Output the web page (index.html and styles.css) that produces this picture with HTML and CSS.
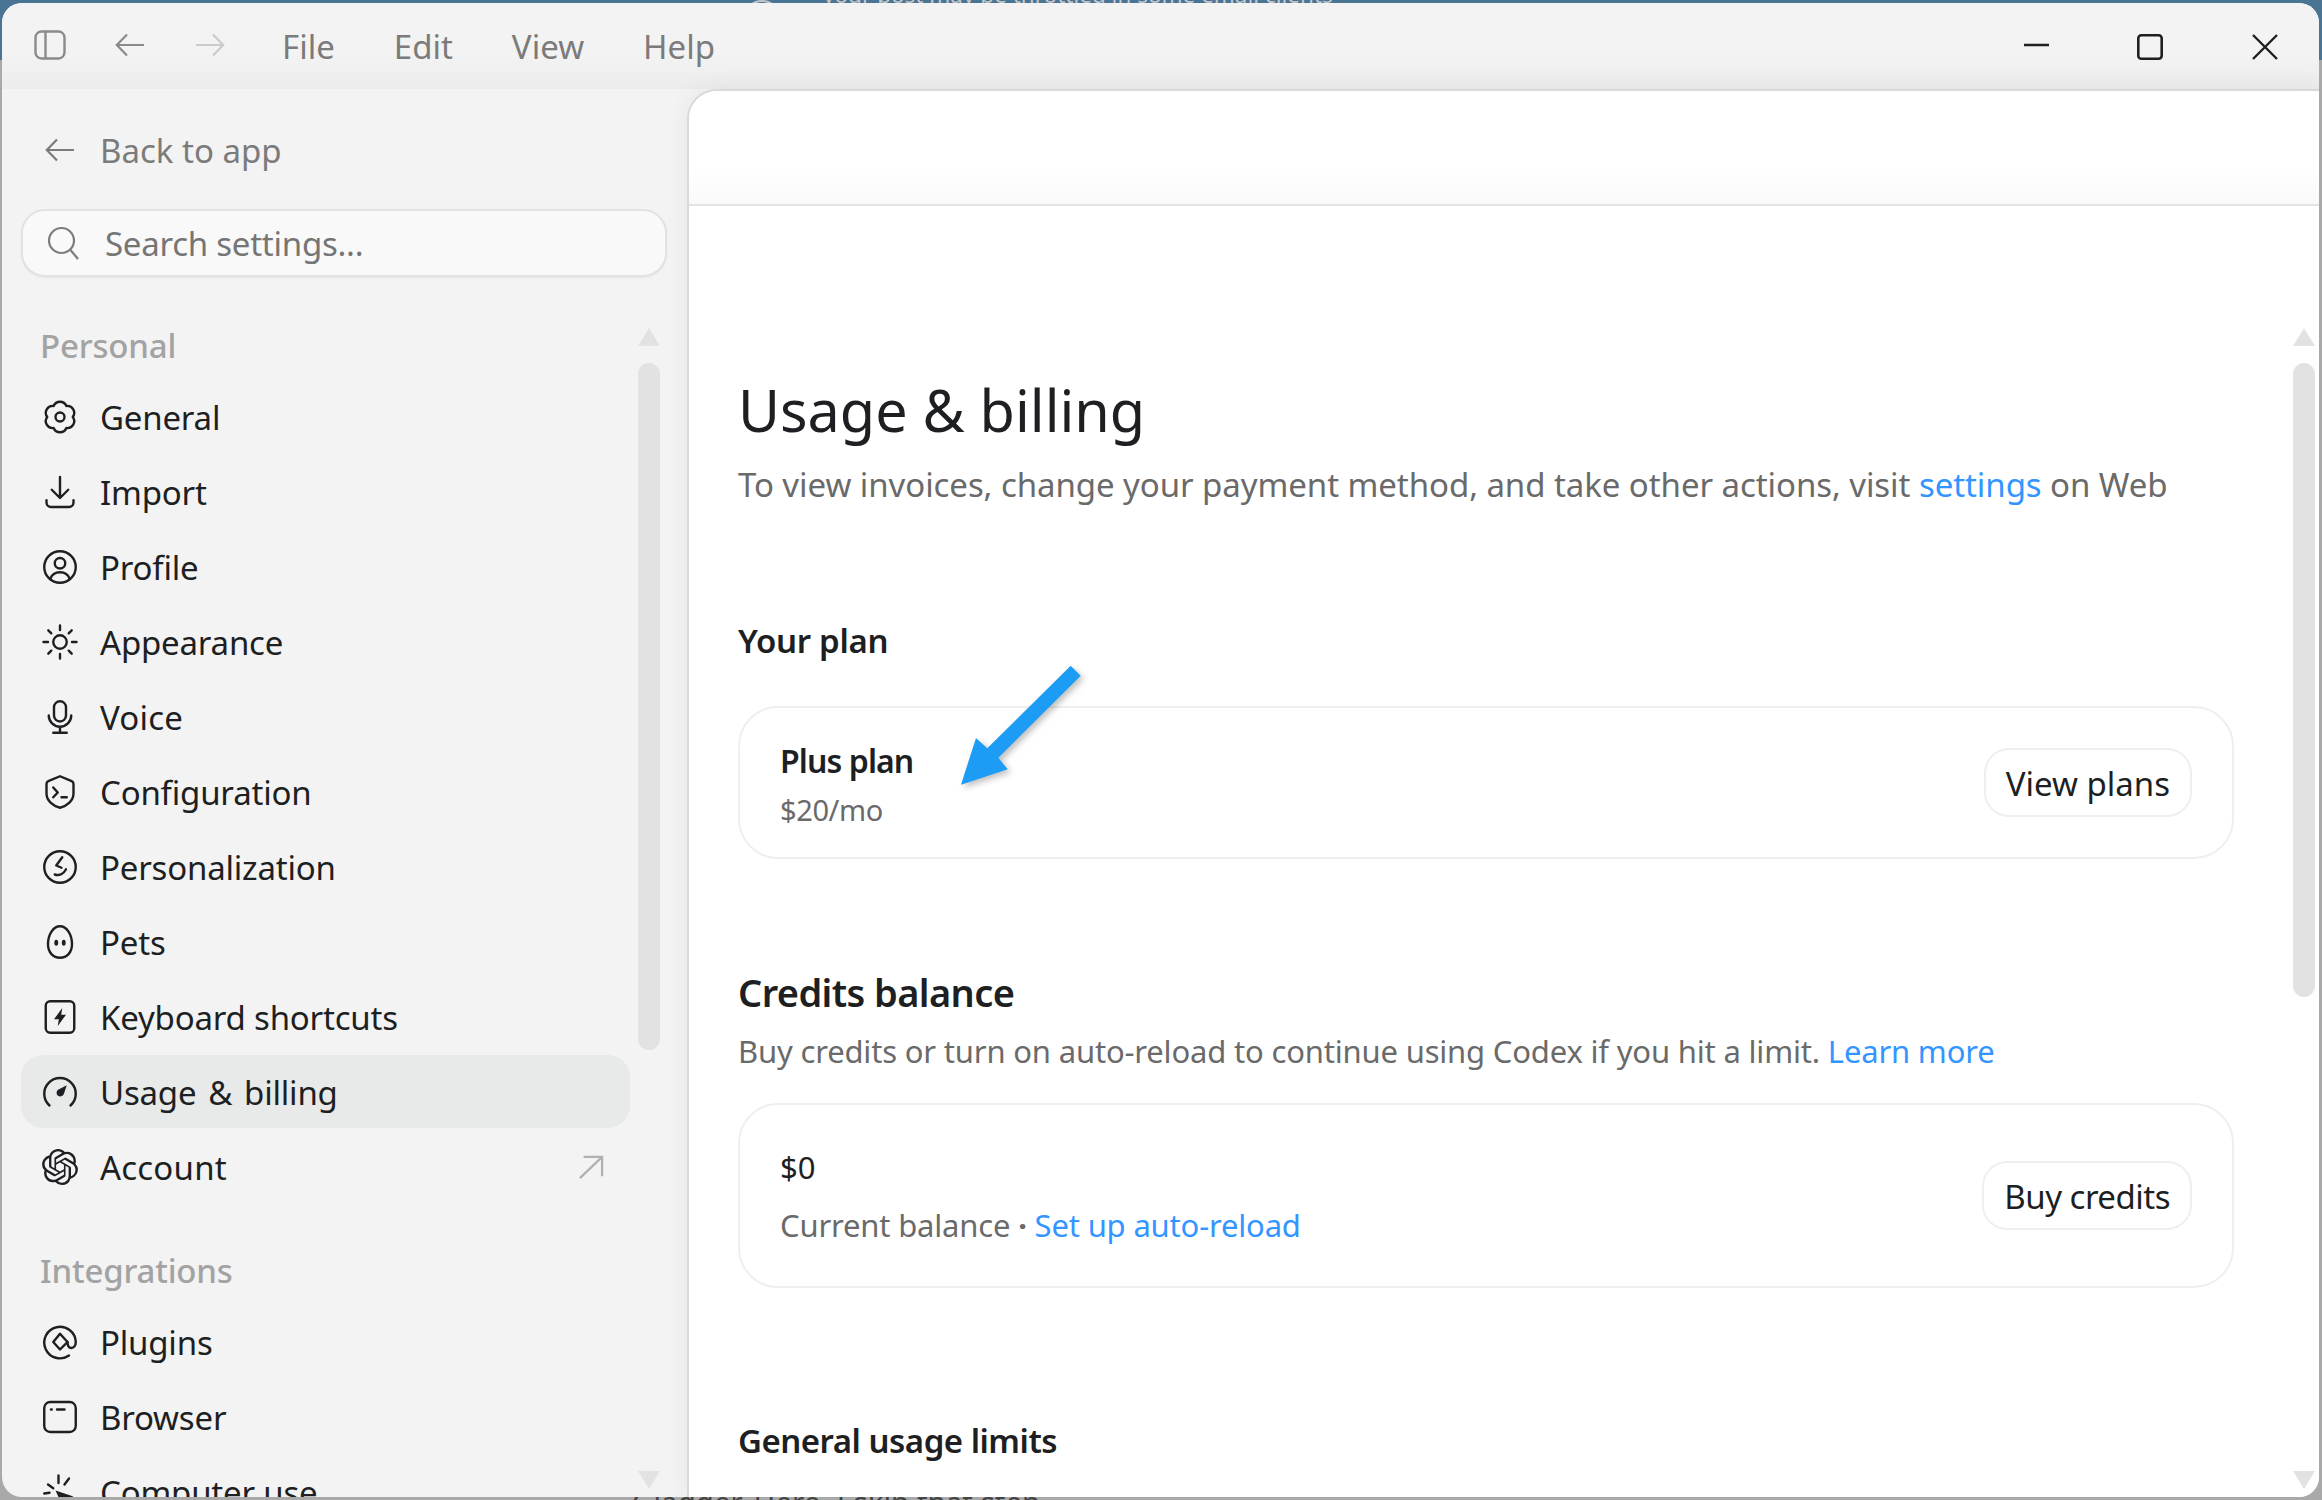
FILE: index.html
```html
<!DOCTYPE html>
<html lang="en">
<head>
<meta charset="UTF-8">
<meta name="viewport" content="width=device-width, initial-scale=1.0">
<title>Usage &amp; billing</title>
<link rel="stylesheet" href="styles.css">
</head>
<body>
  <!-- window behind, only its edges show -->
  <div class="behind-top">
    <span class="behind-circle"></span>
    <span>your post may be throttled in some email clients</span>
  </div>
  <div class="behind-bottom">Gladder. Here, I skip that step.</div>

  <div class="window">
    <div class="titlebar">
      <div class="title-left">
        <svg class="tb-panel" viewBox="0 0 32 30" fill="none" stroke="currentColor" stroke-width="2.4"><rect x="1.5" y="1.5" width="29" height="27" rx="6"/><path d="M11.5 1.5v27"/></svg>
        <svg class="tb-arrow" viewBox="0 0 30 24" fill="none" stroke="currentColor" stroke-width="2.2"><path d="M29 12H2M12 1.5 1.8 12 12 22.5"/></svg>
        <svg class="tb-arrow tb-arrow-off" viewBox="0 0 30 24" fill="none" stroke="currentColor" stroke-width="2.2"><path d="M1 12h27M18 1.5 28.2 12 18 22.5"/></svg>
        <nav class="menu">
          <span>File</span>
          <span>Edit</span>
          <span>View</span>
          <span>Help</span>
        </nav>
      </div>
      <div class="win-controls">
        <svg class="win-min" viewBox="0 0 26 26" fill="none" stroke="currentColor" stroke-width="2.6"><path d="M0 11h25"/></svg>
        <svg viewBox="0 0 26 26" fill="none" stroke="currentColor" stroke-width="2.6"><rect x="1.3" y="1.3" width="23.4" height="23.4" rx="3"/></svg>
        <svg viewBox="0 0 26 26" fill="none" stroke="currentColor" stroke-width="2.4"><path d="M1 1l24 24M25 1 1 25"/></svg>
      </div>
    </div>

    <div class="layout">
      <aside class="sidebar">
        <div class="back-link">
          <svg viewBox="0 0 30 24" fill="none" stroke="currentColor" stroke-width="2.2"><path d="M29 12H2M12 1.5 1.8 12 12 22.5"/></svg>
          <span>Back to app</span>
        </div>
        <div class="search-box">
          <svg viewBox="0 0 32 34" fill="none" stroke="currentColor" stroke-width="2.2"><circle cx="14.5" cy="14.5" r="12.5"/><path d="M23.5 24 31 33"/></svg>
          <span>Search settings...</span>
        </div>

        <div class="side-scroll">
          <div class="nav-list">
            <div class="nav-label">Personal</div>
            <div class="nav-item">
              <svg class="icon" viewBox="0 0 24 24"><path d="M7.75 4.64A4.6 4.6 0 0 1 16.25 4.64 4.6 4.6 0 0 1 20.5 12 4.6 4.6 0 0 1 16.25 19.36 4.6 4.6 0 0 1 7.75 19.36 4.6 4.6 0 0 1 3.5 12 4.6 4.6 0 0 1 7.75 4.64z"/><circle cx="12" cy="12" r="3"/></svg>
              <span>General</span>
            </div>
            <div class="nav-item">
              <svg class="icon" viewBox="0 0 24 24"><path d="M12 2v13.5M6.5 10.5l5.5 5.5 5.5-5.5M3 17.5V19a3 3 0 0 0 3 3h12a3 3 0 0 0 3-3v-1.500"/></svg>
              <span>Import</span>
            </div>
            <div class="nav-item">
              <svg class="icon" viewBox="0 0 24 24"><circle cx="12" cy="12" r="10.500"/><circle cx="12" cy="9.500" r="3.500"/><path d="M5.500 20c1-3 3.500-4.500 6.500-4.500s5.500 1.500 6.500 4.500"/></svg>
              <span>Profile</span>
            </div>
            <div class="nav-item">
              <svg class="icon" viewBox="0 0 24 24"><circle cx="12" cy="12" r="4.500"/><path d="M12 1v3M12 20v3M1 12h3M20 12h3M4.200 4.200l2 2M17.800 17.800l2 2M4.200 19.800l2-2M17.800 6.200l2-2"/></svg>
              <span>Appearance</span>
            </div>
            <div class="nav-item">
              <svg class="icon" viewBox="0 0 24 24"><rect x="8" y="1.500" width="8" height="13.500" rx="4"/><path d="M4.500 11a7.500 7.500 0 0 0 15 0M12 18.500v4M7.500 22.500h9"/></svg>
              <span class="word-wide">Voice</span>
            </div>
            <div class="nav-item">
              <svg class="icon" viewBox="0 0 24 24"><path d="M12 1.500l7.800 3.300a2 2 0 0 1 1.200 1.800V13c0 4.800-4.200 8.200-9 9.500-4.800-1.300-9-4.700-9-9.500V6.600a2 2 0 0 1 1.200-1.800z"/><path d="M7.500 9l3 3.300-3 3.200M13 15.500h3.500"/></svg>
              <span>Configuration</span>
            </div>
            <div class="nav-item">
              <svg class="icon" viewBox="0 0 24 24"><circle cx="12" cy="12" r="10.500"/><path d="M13.500 5.500 9.500 11l3.500 1.500M8.500 17c3 1 6-.5 7.500-3.500"/></svg>
              <span>Personalization</span>
            </div>
            <div class="nav-item">
              <svg class="icon" viewBox="0 0 24 24"><path d="M12 1.500c4.500 0 8 5.500 8 12 0 5.500-3.500 9-8 9s-8-3.500-8-9c0-6.500 3.500-12 8-12z"/><ellipse class="fill" cx="9.500" cy="12.500" rx="1.300" ry="2"/><ellipse class="fill" cx="14.500" cy="12.500" rx="1.300" ry="2"/></svg>
              <span>Pets</span>
            </div>
            <div class="nav-item">
              <svg class="icon" viewBox="0 0 24 24"><rect x="2.500" y="1.500" width="19" height="21" rx="3"/><path class="fill" d="M13.500 6 8 13.500h3.200L10.500 18 16 10.500h-3.200z"/></svg>
              <span>Keyboard shortcuts</span>
            </div>
            <div class="nav-item nav-item-active">
              <svg class="icon" viewBox="0 0 24 24"><path d="M5 21a10.500 10.500 0 1 1 14 0"/><path class="fill" d="M16.500 7.500 14.500 13.500a2.500 2.500 0 1 1-3.800-3z"/></svg>
              <span class="word-gap">Usage &amp; billing</span>
            </div>
            <div class="nav-item">
              <svg class="icon icon-solid" viewBox="0 0 24 24"><path d="M22.2819 9.8211a5.9847 5.9847 0 0 0-.5157-4.9108 6.0462 6.0462 0 0 0-6.5098-2.9A6.0651 6.0651 0 0 0 4.9807 4.1818a5.9847 5.9847 0 0 0-3.9977 2.9 6.0462 6.0462 0 0 0 .7427 7.0966 5.98 5.98 0 0 0 .511 4.9107 6.051 6.051 0 0 0 6.5146 2.9001A5.9847 5.9847 0 0 0 13.2599 24a6.0557 6.0557 0 0 0 5.7718-4.2058 5.9894 5.9894 0 0 0 3.9977-2.9001 6.0557 6.0557 0 0 0-.7475-7.0729zm-9.022 12.6081a4.4755 4.4755 0 0 1-2.8764-1.0408l.1419-.0804 4.7783-2.7582a.7948.7948 0 0 0 .3927-.6813v-6.7369l2.02 1.1686a.071.071 0 0 1 .038.052v5.5826a4.504 4.504 0 0 1-4.4945 4.4944zm-9.6607-4.1254a4.4708 4.4708 0 0 1-.5346-3.0137l.142.0852 4.783 2.7582a.7712.7712 0 0 0 .7806 0l5.8428-3.3685v2.3324a.0804.0804 0 0 1-.0332.0615L9.74 19.9502a4.4992 4.4992 0 0 1-6.1408-1.6464zM2.3408 7.8956a4.485 4.485 0 0 1 2.3655-1.9728V11.6a.7664.7664 0 0 0 .3879.6765l5.8144 3.3543-2.0201 1.1685a.0757.0757 0 0 1-.071 0l-4.8303-2.7865A4.504 4.504 0 0 1 2.3408 7.872zm16.5963 3.8558L13.1038 8.364 15.1192 7.2a.0757.0757 0 0 1 .071 0l4.8303 2.7913a4.4944 4.4944 0 0 1-.6765 8.1042v-5.6772a.79.79 0 0 0-.407-.667zm2.0107-3.0231l-.142-.0852-4.7735-2.7818a.7759.7759 0 0 0-.7854 0L9.409 9.2297V6.8974a.0662.0662 0 0 1 .0284-.0615l4.8303-2.7866a4.4992 4.4992 0 0 1 6.6802 4.66zM8.3065 12.863l-2.02-1.1638a.0804.0804 0 0 1-.038-.0567V6.0742a4.4992 4.4992 0 0 1 7.3757-3.4537l-.142.0805L8.704 5.459a.7948.7948 0 0 0-.3927.6813zm1.0976-2.3654l2.602-1.4998 2.6069 1.4998v2.9994l-2.5974 1.4997-2.6067-1.4997Z"/></svg>
              <span class="word-wide">Account</span>
              <svg class="nav-external" viewBox="0 0 28 26" fill="none" stroke="currentColor" stroke-width="2.4"><path d="M2 25 26 2M6 2h20v21"/></svg>
            </div>

            <div class="nav-label nav-label-next">Integrations</div>
            <div class="nav-item">
              <svg class="icon" viewBox="0 0 24 24"><path d="M18 21a10.500 10.500 0 1 1 4.500-9c0 2-1 4-3 4s-2.500-2-2.500-4"/><path d="M12 6.500l5 5.500-5 5-4.500-5z"/></svg>
              <span>Plugins</span>
            </div>
            <div class="nav-item">
              <svg class="icon" viewBox="0 0 24 24"><rect x="1.500" y="2" width="21" height="20" rx="4"/><path d="M6 7h.500M10 7h5"/></svg>
              <span>Browser</span>
            </div>
            <div class="nav-item">
              <svg class="icon" viewBox="0 0 24 24"><path d="M11 1v5M4 7l3.500 2.500M18 3l-3 4M1.500 13l3.500-.5"/><path class="fill" d="M9 11l12 4-5 2-2 5z"/></svg>
              <span>Computer use</span>
            </div>
          </div>

          <div class="scroll-col">
            <span class="scroll-up"></span>
            <span class="scroll-thumb scroll-thumb-side"></span>
            <span class="scroll-down"></span>
          </div>
        </div>
      </aside>

      <main class="panel">
        <div class="panel-head"></div>
        <div class="panel-body">
          <div class="content">
            <h1>Usage &amp; billing</h1>
            <p class="page-sub">To view invoices, change your payment method, and take other actions, visit <a class="link">settings</a> on Web</p>

            <h2 class="plan-title">Your plan</h2>
            <div class="card card-plan">
              <div class="card-text">
                <div class="plan-name">Plus plan</div>
                <div class="plan-price">$20/mo</div>
              </div>
              <button class="card-btn">View plans</button>
            </div>

            <h2 class="section-title">Credits balance</h2>
            <p class="section-sub">Buy credits or turn on auto-reload to continue using Codex if you hit a limit. <a class="link">Learn more</a></p>
            <div class="card card-credits">
              <div class="card-text-credits">
                <div class="credit-amount">$0</div>
                <div class="credit-note">Current balance <span class="dot">·</span> <a class="link">Set up auto-reload</a></div>
              </div>
              <button class="card-btn card-btn-tight">Buy credits</button>
            </div>

            <h2 class="limits-title">General usage limits</h2>
          </div>
          <div class="scroll-col scroll-col-main">
            <span class="scroll-up"></span>
            <span class="scroll-thumb scroll-thumb-main"></span>
            <span class="scroll-down"></span>
          </div>
        </div>
      </main>
    </div>
  </div>

  <!-- annotation drawn on top of the screenshot -->
  <svg class="annotation" viewBox="0 0 2322 1500">
    <polygon points="1070.700,665.700 1080.700,675.700 998.300,757.700 1007.700,769.300 961,784.700 976,738 987.300,748.300"/>
  </svg>
</body>
</html>
```

FILE: styles.css
```css
* {
  box-sizing: border-box;
}

html, body {
  margin: 0;
  padding: 0;
}

body {
  width: 2322px;
  height: 1500px;
  overflow: hidden;
  position: relative;
  padding: 3px 3px 3px 2px;
  font-family: "Noto Sans", "Open Sans", sans-serif;
  color: #1d1f22;
  background: linear-gradient(#4a7494 0, #4a7494 60px, #a9a9a9 60px, #a9a9a9 100%);
}

.behind-top {
  position: absolute;
  top: -20px;
  left: 745px;
  display: flex;
  align-items: flex-start;
  gap: 44px;
  font-size: 22.5px;
  line-height: 30px;
  white-space: nowrap;
  color: #c4c8cc;
}

.behind-circle {
  width: 34px;
  height: 30px;
  margin-top: 20px;
  border: 2px solid #c4c8cc;
  border-radius: 50%;
}

.behind-bottom {
  position: absolute;
  top: 1486px;
  left: 632px;
  font-size: 29.5px;
  line-height: 32px;
  white-space: nowrap;
  color: #444;
}

.window {
  position: relative;
  width: 2317px;
  height: 1494px;
  display: flex;
  flex-direction: column;
  overflow: hidden;
  background: #f3f3f3;
  border-radius: 20px;
}

/* title bar */
.titlebar {
  height: 86px;
  flex: none;
  display: flex;
  justify-content: space-between;
  background: linear-gradient(#f3f3f3 50px, #ececec);
}

.title-left {
  display: flex;
  align-items: center;
  height: 84px;
  padding-left: 32px;
  color: #8a8a8a;
}

.tb-panel {
  width: 32px;
  height: 30px;
  margin-right: 49px;
}

.tb-arrow {
  width: 30px;
  height: 24px;
  margin-right: 50px;
}

.tb-arrow-off {
  color: #cbcbcb;
  margin-right: 57px;
}

.menu {
  display: flex;
  gap: 59px;
  margin-top: 3px;
  font-size: 33px;
  line-height: 84px;
  color: #7b7b7b;
}

.win-controls {
  display: flex;
  gap: 89px;
  padding: 31px 41px 0 0;
  color: #1d1f22;
}

.win-controls svg {
  width: 26px;
  height: 26px;
}

.win-controls .win-min {
  margin-right: -2px;
}

.layout {
  flex: 1;
  display: flex;
  min-height: 0;
}

/* sidebar */
.sidebar {
  width: 685px;
  flex: none;
  display: flex;
  flex-direction: column;
  padding: 31px 0 0 19px;
}

.back-link {
  height: 60px;
  margin-bottom: 2px;
  display: flex;
  align-items: center;
  gap: 25px;
  padding-left: 24px;
  font-size: 33px;
  color: #7b7b7b;
}

.back-link svg {
  width: 30px;
  height: 24px;
}

.search-box {
  width: 646px;
  height: 68px;
  margin-top: 27px;
  display: flex;
  align-items: center;
  gap: 26px;
  padding-left: 24px;
  font-size: 33px;
  letter-spacing: -0.25px;
  color: #757575;
  background: #f9f9f9;
  border: 2px solid #e2e2e2;
  border-radius: 24px;
  box-shadow: 0 1px 2px rgba(0,0,0,0.05);
}

.search-box svg {
  width: 32px;
  height: 34px;
  color: #7d7d7d;
}

.side-scroll {
  flex: 1;
  min-height: 0;
  margin-top: 44px;
  display: flex;
  gap: 7px;
  overflow: hidden;
}

.nav-list {
  width: 609px;
  flex: none;
}

.nav-label {
  height: 50px;
  line-height: 50px;
  margin-bottom: 9px;
  padding-left: 19px;
  font-size: 33px;
  font-weight: 500;
  letter-spacing: -0.2px;
  color: #a3a3a3;
}

.nav-label-next {
  margin-top: 43px;
}

.nav-item {
  height: 73px;
  margin-bottom: 2px;
  display: flex;
  align-items: center;
  gap: 22px;
  padding: 0 26px 0 21px;
  font-size: 33px;
  letter-spacing: -0.2px;
  border-radius: 22px;
}

.nav-item span {
  margin-top: 2px;
}

.nav-item-active {
  background: #e8e9e9;
}

.word-wide {
  letter-spacing: 0.2px;
}

.word-gap {
  word-spacing: 3.5px;
}

.icon {
  width: 36px;
  height: 36px;
  flex: none;
  fill: none;
  stroke: #1d1f22;
  stroke-width: 1.6;
  stroke-linecap: round;
  stroke-linejoin: round;
}

.icon .fill {
  fill: #1d1f22;
  stroke: none;
}

.icon-solid {
  fill: #1d1f22;
  stroke: none;
}

.nav-external {
  width: 26px;
  height: 24px;
  margin-left: auto;
  color: #b0b0b0;
}

/* scrollbars */
.scroll-col {
  width: 24px;
  flex: none;
  display: flex;
  flex-direction: column;
  align-items: center;
  padding: 7px 0 8px;
}

.scroll-up,
.scroll-down {
  width: 0;
  height: 0;
  border-left: 11px solid transparent;
  border-right: 11px solid transparent;
}

.scroll-up {
  border-bottom: 18px solid #e2e2e2;
}

.scroll-down {
  margin-top: auto;
  border-top: 18px solid #e2e2e2;
}

.scroll-thumb {
  width: 22px;
  margin-top: 17px;
  background: #e2e2e2;
  border-radius: 11px;
}

.scroll-thumb-side {
  height: 687px;
}

.scroll-thumb-main {
  height: 634px;
}

/* main panel */
.panel {
  flex: 1;
  min-width: 0;
  display: flex;
  flex-direction: column;
  background: #fff;
  border-top: 2px solid #d9d9d9;
  border-left: 2px solid #d9d9d9;
  border-top-left-radius: 30px;
  box-shadow: 0 0 24px rgba(0,0,0,0.06);
}

.panel-head {
  height: 115px;
  flex: none;
  background: linear-gradient(#fff 70%, #f9f9f9);
  border-bottom: 2px solid #e4e4e4;
  border-top-left-radius: 28px;
}

.panel-body {
  flex: 1;
  min-height: 0;
  display: flex;
  overflow: hidden;
}

.content {
  flex: 1;
  min-width: 0;
  padding: 164px 58px 0 49px;
}

.scroll-col-main {
  margin-right: 3px;
  padding-top: 122px;
}

h1 {
  margin: 0;
  font-size: 57.5px;
  font-weight: 400;
  line-height: 80px;
}

.page-sub {
  margin: 10px 0 0;
  font-size: 33px;
  letter-spacing: -0.07px;
  line-height: 50px;
  color: #6a6a6a;
  white-space: nowrap;
}

.link {
  color: #3395ff;
}

.plan-title {
  margin: 106px 0 40px;
  font-size: 33px;
  font-weight: 600;
  letter-spacing: -0.3px;
  line-height: 50px;
}

.card {
  display: flex;
  align-items: center;
  justify-content: space-between;
  padding: 0 40px;
  border: 2px solid #efefef;
  border-radius: 40px;
}

.card-plan {
  height: 153px;
}

.card-text {
  margin-top: 6px;
}

.plan-name {
  font-size: 32px;
  font-weight: 600;
  letter-spacing: -0.9px;
  line-height: 46px;
}

.plan-price {
  margin-top: 3px;
  font-size: 29px;
  letter-spacing: -0.4px;
  line-height: 46px;
  color: #6a6a6a;
}

.card-btn {
  height: 69px;
  padding: 2px 20px 0;
  font-family: inherit;
  font-size: 33px;
  color: #1d1f22;
  background: #fff;
  border: 2px solid #efefef;
  border-radius: 25px;
}

.card-btn-tight {
  letter-spacing: -0.5px;
}

.section-title {
  margin: 103px 0 0;
  font-size: 38px;
  font-weight: 600;
  letter-spacing: -0.6px;
  line-height: 60px;
}

.section-sub {
  margin: 4px 0 27px;
  font-size: 31px;
  letter-spacing: -0.18px;
  line-height: 50px;
  color: #6a6a6a;
  white-space: nowrap;
}

.card-credits {
  height: 185px;
}

.credit-amount {
  font-size: 31px;
  line-height: 50px;
}

.credit-note {
  margin-top: 8px;
  font-size: 31px;
  letter-spacing: -0.18px;
  line-height: 50px;
  color: #6a6a6a;
}

.dot {
  font-weight: 700;
}

.limits-title {
  margin: 128px 0 0;
  font-size: 33px;
  font-weight: 600;
  letter-spacing: -0.5px;
  line-height: 50px;
}

/* blue arrow, over everything */
.annotation {
  position: absolute;
  top: 0;
  left: 0;
  width: 2322px;
  height: 1500px;
  pointer-events: none;
}

.annotation polygon {
  fill: #1c9cf4;
  filter: drop-shadow(3px 3px 3px rgba(0,0,0,0.25));
}
```
